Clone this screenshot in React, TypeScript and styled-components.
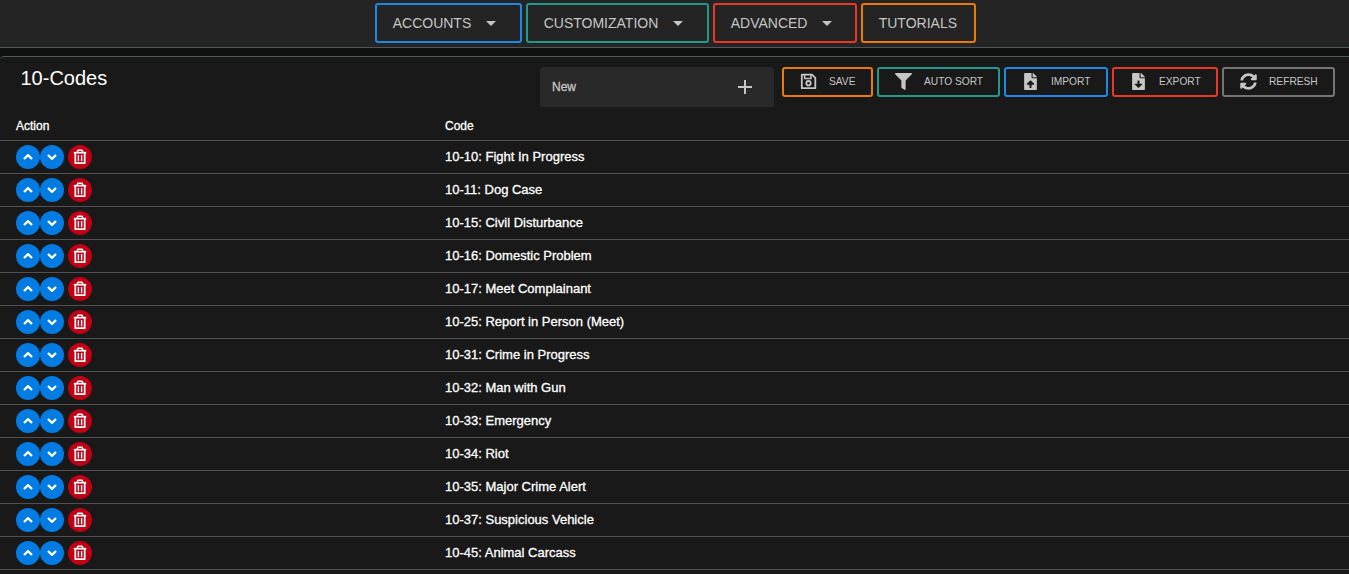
import React from 'react';
import styled, { createGlobalStyle, css } from 'styled-components';
import { FaFilter, FaSyncAlt, FaFileUpload, FaFileDownload } from 'react-icons/fa';

const GlobalStyle = createGlobalStyle`
  * { box-sizing: border-box; }
  html, body { margin: 0; height: 100%; overflow: hidden; background: #0f0f0f; }
  body { font-family: "Liberation Sans", Arial, sans-serif; color: #fff; }
  button { font-family: inherit; margin: 0; }
`;

const Page = styled.div`
  height: 574px;
  overflow: hidden;
  display: flex;
  flex-direction: column;
`;

const NavBar = styled.nav`
  flex: none;
  height: 48px;
  padding-top: 3px;
  padding-left: 2px;
  display: flex;
  justify-content: center;
  align-items: flex-start;
  gap: 4px;
  background: #242424;
  border-bottom: 1px solid #4f575b;
`;

const OutlineButton = styled.button<{ $color: string; $width: number }>`
  width: ${p => p.$width}px;
  border: 2px solid ${p => p.$color};
  border-radius: 3px;
  background: transparent;
  color: #c6c6c6;
  display: flex;
  align-items: center;
  text-transform: uppercase;
  white-space: nowrap;
`;

const NavButton = styled(OutlineButton)`
  height: 40px;
  padding: 0 0 0 15.7px;
  font-size: 14px;
`;

const Caret = styled.span`
  margin-left: 15px;
  margin-top: 1px;
  border: 5.5px solid transparent;
  border-top: 5px solid #c6c6c6;
  border-bottom: 0;
`;

const Card = styled.section`
  margin-top: 8px;
  flex: none;
  width: 100%;
  min-height: 530px;
  background: #191919;
  border-top: 1px solid #4f575b;
  border-top-left-radius: 4px;
`;

const CardHeader = styled.header`
  height: 54px;
  padding: 10px 14px 0 20.5px;
  display: flex;
  align-items: flex-start;
`;

const Title = styled.h1`
  margin: -1px auto 0 0;
  font-size: 20px;
  line-height: 24px;
  font-weight: 400;
`;

const NewField = styled.div`
  width: 234px;
  height: 40px;
  margin-right: 8px;
  padding: 0 21px 0 12px;
  border-radius: 4px 4px 0 0;
  background: #292929;
  color: #c6c6c6;
  font-size: 12px;
  -webkit-text-stroke: 0.3px #c6c6c6;
  display: flex;
  align-items: center;
  justify-content: space-between;
`;

const Tools = styled.div`
  display: flex;
  gap: 4px;
`;

const ToolButton = styled(OutlineButton)`
  height: 30px;
  padding: 0 0 1px 16px;
  gap: 12px;
  font-size: 10.2px;
  svg { flex: none; }
`;

const Row = styled.div<{ $head?: boolean }>`
  height: ${p => (p.$head ? 30 : 33)}px;
  padding-left: 16px;
  border-bottom: 1px solid #515151;
  display: grid;
  grid-template-columns: 429px 1fr;
  align-items: center;
  font-size: 13px;
  -webkit-text-stroke: 0.3px #fff;
  ${p => p.$head && css`font-size: 12px;`}
`;

const Code = styled.span`
  padding-bottom: 2px;
`;

const Actions = styled.div`
  display: flex;
`;

const RoundButton = styled.button<{ $danger?: boolean }>`
  width: 24px;
  height: 24px;
  padding: 0;
  border: 0;
  border-radius: 50%;
  display: grid;
  place-items: center;
  color: #fff;
  background: ${p => (p.$danger ? '#c10015' : '#027be3')};
  margin-left: ${p => (p.$danger ? 4 : 0)}px;
`;

const Chevron = ({ down = false }: { down?: boolean }) => (
  <svg width="10" height="6" viewBox="0 0 10 6" fill="none" stroke="#fff" strokeWidth="2.4">
    <path d={down ? 'M1 1l4 3.8L9 1' : 'M1 5l4-3.8L9 5'} />
  </svg>
);

const Trash = () => (
  <svg width="14" height="16" viewBox="0 0 14 16" fill="none" stroke="#fff">
    <path d="M.8 3.7h12.4" strokeWidth="1.7" />
    <path d="M4 3.3l1-2h4l1 2" strokeWidth="1.5" />
    <path d="M2.3 4v10.2h9.4V4" strokeWidth="1.7" strokeLinejoin="round" />
    <path d="M5.4 6v6.2M8.6 6v6.2" strokeWidth="1.4" />
  </svg>
);

const Disk = () => (
  <svg width="17" height="17" viewBox="0 0 17 17" fill="none" stroke="#c6c6c6" strokeWidth="1.8">
    <path d="M1.8 1.6h10.2l3.3 3.2V15.2H1.8z" strokeLinejoin="round" />
    <path d="M4.6 2v3.4h6.4V2" strokeWidth="1.5" />
    <circle cx="8.5" cy="10.2" r="2.2" />
  </svg>
);

const codes = [
  '10-10: Fight In Progress', '10-11: Dog Case', '10-15: Civil Disturbance',
  '10-16: Domestic Problem', '10-17: Meet Complainant', '10-25: Report in Person (Meet)',
  '10-31: Crime in Progress', '10-32: Man with Gun', '10-33: Emergency', '10-34: Riot',
  '10-35: Major Crime Alert', '10-37: Suspicious Vehicle', '10-45: Animal Carcass',
];

export default function App() {
  return (
    <Page>
      <GlobalStyle />
      <NavBar>
        <NavButton $color="#1e88e5" $width={147}>Accounts<Caret /></NavButton>
        <NavButton $color="#26988a" $width={183}>Customization<Caret /></NavButton>
        <NavButton $color="#e8382a" $width={144}>Advanced<Caret /></NavButton>
        <NavButton $color="#ea7a0c" $width={115}>Tutorials</NavButton>
      </NavBar>
      <Card>
        <CardHeader>
          <Title>10-Codes</Title>
          <NewField>New
            <svg width="16" height="16" viewBox="0 0 16 16" stroke="#c6c6c6" strokeWidth="2"><path d="M8 1v14M1 8h14" /></svg>
          </NewField>
          <Tools>
            <ToolButton $color="#ea7a0c" $width={91}><Disk />Save</ToolButton>
            <ToolButton $color="#26988a" $width={123}><FaFilter size={17} />Auto Sort</ToolButton>
            <ToolButton $color="#1e88e5" $width={104}><FaFileUpload size={17} />Import</ToolButton>
            <ToolButton $color="#e8382a" $width={106}><FaFileDownload size={17} />Export</ToolButton>
            <ToolButton $color="#757575" $width={113}><FaSyncAlt size={17} />Refresh</ToolButton>
          </Tools>
        </CardHeader>
        <Row $head><span>Action</span><span>Code</span></Row>
        {codes.map(code => (
          <Row key={code}>
            <Actions>
              <RoundButton><Chevron /></RoundButton>
              <RoundButton><Chevron down /></RoundButton>
              <RoundButton $danger><Trash /></RoundButton>
            </Actions>
            <Code>{code}</Code>
          </Row>
        ))}
      </Card>
    </Page>
  );
}
